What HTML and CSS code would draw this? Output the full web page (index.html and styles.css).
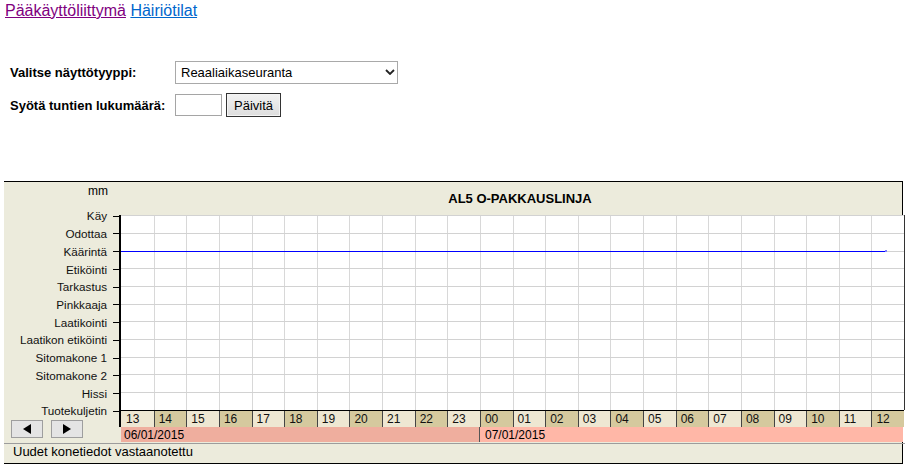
FILE: index.html
```html
<!DOCTYPE html>
<html lang="fi">
<head>
<meta charset="utf-8">
<title>AL5 O-PAKKAUSLINJA</title>
<link rel="stylesheet" href="styles.css">
</head>
<body>
<div class="nav"><a class="visited" href="#">Pääkäyttöliittymä</a> <a class="link" href="#">Häiriötilat</a></div>

<form class="filters">
  <label for="tyyppi">Valitse näyttötyyppi:</label>
  <span class="select-wrap">
    <select id="tyyppi"><option>Reaaliaikaseuranta</option></select>
    <svg class="chev" width="10" height="6" viewBox="0 0 10 6"><path d="M1 1 L5 5 L9 1" fill="none" stroke="#222" stroke-width="1.8"/></svg>
  </span>
  <label for="tunnit">Syötä tuntien lukumäärä:</label>
  <span class="count">
    <input id="tunnit" type="text">
    <button type="button" class="update">Päivitä</button>
  </span>
</form>

<div class="chart">
  <div class="side">
    <div class="unit">mm</div>
    <ul class="cats">
      <li>Käy</li>
      <li>Odottaa</li>
      <li>Käärintä</li>
      <li>Etiköinti</li>
      <li>Tarkastus</li>
      <li>Pinkkaaja</li>
      <li>Laatikointi</li>
      <li>Laatikon etiköinti</li>
      <li>Sitomakone 1</li>
      <li>Sitomakone 2</li>
      <li>Hissi</li>
      <li>Tuotekuljetin</li>
    </ul>
    <div class="pager">
      <button type="button" aria-label="Edellinen"><svg width="8" height="10" viewBox="0 0 8 10"><path d="M8 0 L0 5 L8 10 Z" fill="#000"/></svg></button>
      <button type="button" aria-label="Seuraava"><svg width="8" height="10" viewBox="0 0 8 10"><path d="M0 0 L8 5 L0 10 Z" fill="#000"/></svg></button>
    </div>
  </div>
  <div class="main">
    <div class="title">AL5 O-PAKKAUSLINJA</div>
    <div class="plot">
      <svg width="783" height="195" viewBox="0 0 783 195" shape-rendering="crispEdges">
        <g stroke="#d8d8d8" stroke-width="1">
          <line x1="33.5" y1="0" x2="33.5" y2="195"/>
          <line x1="65.5" y1="0" x2="65.5" y2="195"/>
          <line x1="98.5" y1="0" x2="98.5" y2="195"/>
          <line x1="131.5" y1="0" x2="131.5" y2="195"/>
          <line x1="163.5" y1="0" x2="163.5" y2="195"/>
          <line x1="196.5" y1="0" x2="196.5" y2="195"/>
          <line x1="228.5" y1="0" x2="228.5" y2="195"/>
          <line x1="261.5" y1="0" x2="261.5" y2="195"/>
          <line x1="294.5" y1="0" x2="294.5" y2="195"/>
          <line x1="326.5" y1="0" x2="326.5" y2="195"/>
          <line x1="359.5" y1="0" x2="359.5" y2="195"/>
          <line x1="392.5" y1="0" x2="392.5" y2="195"/>
          <line x1="424.5" y1="0" x2="424.5" y2="195"/>
          <line x1="457.5" y1="0" x2="457.5" y2="195"/>
          <line x1="489.5" y1="0" x2="489.5" y2="195"/>
          <line x1="522.5" y1="0" x2="522.5" y2="195"/>
          <line x1="555.5" y1="0" x2="555.5" y2="195"/>
          <line x1="587.5" y1="0" x2="587.5" y2="195"/>
          <line x1="620.5" y1="0" x2="620.5" y2="195"/>
          <line x1="653.5" y1="0" x2="653.5" y2="195"/>
          <line x1="685.5" y1="0" x2="685.5" y2="195"/>
          <line x1="718.5" y1="0" x2="718.5" y2="195"/>
          <line x1="750.5" y1="0" x2="750.5" y2="195"/>
        </g>
        <g stroke="#d2d2d2" stroke-width="1">
          <line x1="0" y1="0.5" x2="783" y2="0.5"/>
          <line x1="0" y1="18.5" x2="783" y2="18.5"/>
          <line x1="0" y1="36.5" x2="783" y2="36.5"/>
          <line x1="0" y1="53.5" x2="783" y2="53.5"/>
          <line x1="0" y1="71.5" x2="783" y2="71.5"/>
          <line x1="0" y1="89.5" x2="783" y2="89.5"/>
          <line x1="0" y1="106.5" x2="783" y2="106.5"/>
          <line x1="0" y1="124.5" x2="783" y2="124.5"/>
          <line x1="0" y1="142.5" x2="783" y2="142.5"/>
          <line x1="0" y1="159.5" x2="783" y2="159.5"/>
          <line x1="0" y1="177.5" x2="783" y2="177.5"/>
        </g>
        <line x1="0" y1="36.5" x2="765" y2="36.5" stroke="#0000ff" stroke-width="1"/>
        <rect x="764" y="35" width="2" height="2" fill="#8080ff"/>
      </svg>
    </div>
    <div class="hours">
      <span class="light">13</span><span class="dark">14</span><span class="light">15</span><span class="dark">16</span><span class="light">17</span><span class="dark">18</span><span class="light">19</span><span class="dark">20</span><span class="light">21</span><span class="dark">22</span><span class="light">23</span><span class="dark">00</span><span class="light">01</span><span class="dark">02</span><span class="light">03</span><span class="dark">04</span><span class="light">05</span><span class="dark">06</span><span class="light">07</span><span class="dark">08</span><span class="light">09</span><span class="dark">10</span><span class="light">11</span><span class="dark">12</span>
    </div>
    <div class="dates">
      <span class="day1">06/01/2015</span>
      <span class="day2">07/01/2015</span>
    </div>
  </div>
  <div class="status">Uudet konetiedot vastaanotettu</div>
</div>
</body>
</html>
```

FILE: styles.css
```css
* {
  box-sizing: border-box;
}

body {
  margin: 0;
  font-family: "Liberation Sans", Arial, sans-serif;
  color: #000;
  background: #fff;
}

.nav {
  padding: 2px 0 0 5px;
  height: 20px;
  font-size: 16px;
  line-height: 18px;
}

.nav a {
  text-decoration: underline;
}

.nav .visited {
  color: #800080;
}

.nav .link {
  color: #0066cc;
}

.filters {
  margin: 41px 0 0 0;
  padding-left: 10px;
  display: grid;
  grid-template-columns: 165px auto;
  row-gap: 9px;
  align-items: center;
  font-size: 13px;
}

.filters label {
  font-weight: bold;
}

.select-wrap {
  position: relative;
  display: block;
  width: 223px;
  height: 23px;
}

.select-wrap select {
  appearance: none;
  -webkit-appearance: none;
  display: block;
  width: 100%;
  height: 100%;
  margin: 0;
  padding: 0 0 0 5px;
  border: 1px solid #a9a9a9;
  border-radius: 0;
  background: #fff;
  color: #000;
  font: 13px "Liberation Sans", Arial, sans-serif;
}

.chev {
  position: absolute;
  right: 3px;
  top: 8px;
  pointer-events: none;
}

.count {
  display: flex;
  align-items: center;
  gap: 4px;
}

.count input {
  width: 47px;
  height: 22px;
  margin: 0;
  padding: 0 3px;
  border: 1px solid #a5a5a5;
  border-radius: 0;
  font: 13px "Liberation Sans", Arial, sans-serif;
}

.update {
  width: 55px;
  height: 24px;
  margin: 0;
  padding: 0;
  border: 1px solid #333;
  border-radius: 0;
  box-shadow: inset 0 0 0 1px #f4f4f4;
  background: linear-gradient(#f2f2f2, #dddddd);
  color: #000;
  font: 13px "Liberation Sans", Arial, sans-serif;
}

.chart {
  margin: 64px 0 0 4px;
  width: 899px;
  border-top: 1px solid #000;
  border-right: 1px solid #000;
  border-bottom: 1px solid #000;
  background: #ecebdc;
  display: grid;
  grid-template-columns: 115px 786px;
  font-size: 12px;
}

.side {
  display: flex;
  flex-direction: column;
}

.unit {
  height: 25.4px;
  line-height: 18px;
  text-align: right;
  padding-right: 11px;
}

.cats {
  list-style: none;
  margin: 0;
  padding: 0;
}

.cats li {
  height: 17.73px;
  line-height: 17.73px;
  display: flex;
  justify-content: flex-end;
  align-items: center;
  white-space: nowrap;
  font-size: 11.7px;
  color: #111;
}

.cats li::after {
  content: "";
  width: 6px;
  height: 1px;
  margin-left: 6px;
  background: #000;
}

.pager {
  display: flex;
  gap: 8px;
  padding-left: 7px;
}

.pager button {
  width: 32px;
  height: 18px;
  margin: 0;
  padding: 0;
  display: flex;
  align-items: center;
  justify-content: center;
  border: 1px solid #9e9e9e;
  border-radius: 0;
  background: #e4e4e4;
}

.pager svg {
  display: block;
}

.main {
  display: flex;
  flex-direction: column;
}

.title {
  height: 33px;
  line-height: 33px;
  padding-left: 16px;
  text-align: center;
  font-size: 13px;
  font-weight: bold;
}

.plot {
  height: 195px;
  border-left: 2px solid #000;
  border-right: 1px solid #333;
  background: #fff;
}

.plot svg {
  display: block;
}

.hours {
  display: grid;
  grid-template-columns: repeat(24, minmax(0, 1fr));
  width: 785px;
  height: 17px;
  border-top: 1px solid #000;
  border-left: 2px solid #000;
}

.hours span {
  line-height: 16px;
  padding-left: 4px;
  border-left: 1px solid #444;
  color: #111;
}

.hours span:first-child {
  border-left: 0;
  padding-left: 5px;
}

.hours .light {
  background: #eee7d2;
}

.hours .dark {
  background: #d5c99e;
}

.dates {
  display: grid;
  grid-template-columns: 358px 1fr;
  width: 782px;
  height: 15px;
  margin: 0 0 1px 2px;
  line-height: 17px;
  overflow: hidden;
}

.day1 {
  background: #efae9e;
  padding-left: 3px;
}

.day2 {
  background: #ffb7a7;
  border-left: 1px solid #555;
  padding-left: 5px;
}

.status {
  grid-column: 1 / -1;
  height: 20px;
  border-top: 1px solid #9c9c9c;
  padding-left: 9px;
  line-height: 16px;
  font-size: 13px;
}
```
